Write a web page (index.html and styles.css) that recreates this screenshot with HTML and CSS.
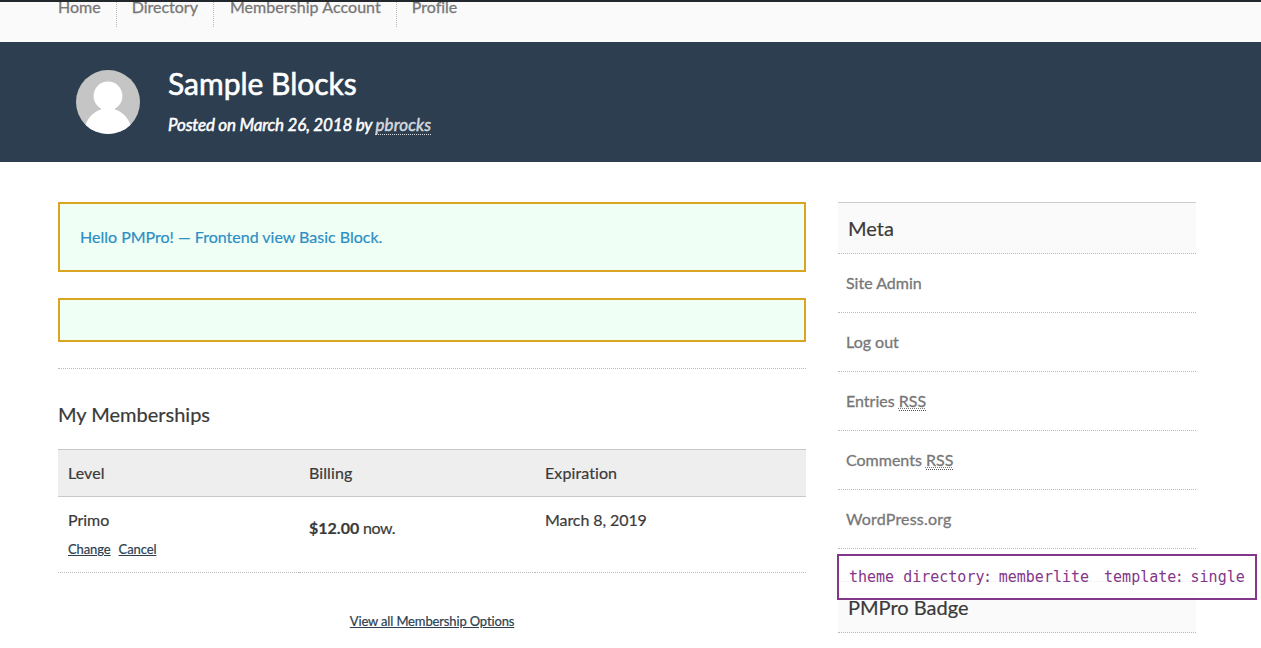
FILE: index.html
```html
<!DOCTYPE html>
<html lang="en">
<head>
<meta charset="utf-8">
<title>Sample Blocks</title>
<link rel="stylesheet" href="styles.css">
</head>
<body>
<nav class="nav"><a>Home</a><a>Directory</a><a class="account">Membership Account</a><a>Profile</a></nav>
<header class="masthead">
  <svg class="avatar" viewBox="0 0 64 64"><defs><clipPath id="round"><circle cx="32" cy="32" r="32"/></clipPath></defs><g clip-path="url(#round)"><rect width="64" height="64" fill="#c5c5c5"/><g fill="#fff"><circle cx="32" cy="26" r="14.400"/><path d="M25 36v3.500C17 42 12 48 9.500 55v9h45v-9C52 48 47 42 39 39.500V36z"/></g></g></svg>
  <div class="heading">
    <h1>Sample Blocks</h1>
    <p>Posted on March 26, 2018 by <a>pbrocks</a></p>
  </div>
</header>
<div class="page">
  <main class="content">
    <div class="block block-text">Hello PMPro! — Frontend view Basic Block.</div>
    <div class="block block-empty"></div>
    <hr>
    <h2>My Memberships</h2>
    <table>
      <thead><tr><th class="level">Level</th><th class="billing">Billing</th><th>Expiration</th></tr></thead>
      <tbody><tr><td>Primo<div class="actions"><a>Change</a><a>Cancel</a></div></td><td class="price"><b>$12.00</b> now.</td><td class="expires">March 8, 2019</td></tr></tbody>
    </table>
    <p class="options"><a>View all Membership Options</a></p>
  </main>
  <aside class="sidebar">
    <h3>Meta</h3>
    <ul>
      <li>Site Admin</li><li>Log out</li><li>Entries <abbr>RSS</abbr></li><li>Comments <abbr>RSS</abbr></li><li class="wp">WordPress.org</li>
    </ul>
    <h3 class="badge-title">PMPro Badge</h3>
  </aside>
</div>
<div class="debug"><span>theme directory<i>:</i> memberlite</span><span>template<i>:</i> single</span></div>
</body>
</html>
```
FILE: styles.css
```css
* { box-sizing: border-box; }
html, body { height: 648px; overflow: hidden; }
body { margin: 0; background: #fff; color: #3a3a3a; font: 16px/26px Lato, sans-serif; font-variant-ligatures: none; -webkit-text-stroke: .2px; }
h1, h2, h3, p, ul { margin: 0; padding: 0; }
.nav { display: flex; height: 42px; padding-left: 43px; background: #fafafa; border-top: 2px solid #23282d; color: #777; overflow: hidden; }
.nav a { height: 25px; line-height: 10px; padding: 0 15px; border-right: 1px dotted #bbb; -webkit-text-stroke: .3px; }
.nav .account { letter-spacing: .06px; padding-left: 16px; }
.nav a:last-child { border: 0; }
.masthead { display: flex; height: 120px; padding: 28px 76px; background: #2c3e50; color: #fff; }
.avatar { width: 64px; height: 64px; margin-right: 28px; }
.heading h1 { font-size: 30px; line-height: 26px; font-weight: 400; -webkit-text-stroke: .6px; }
.heading p { margin-top: 16px; font-size: 17px; letter-spacing: -.15px; word-spacing: -.3px; font-style: italic; font-weight: 400; -webkit-text-stroke: .5px; }
.heading a { display: inline-block; line-height: 19px; letter-spacing: .1px; color: #d5d8dc; border-bottom: 1px dotted #ddd; }
.page { display: flex; gap: 32px; padding: 40px 65px 0 58px; }
.content { width: 748px; }
.block { margin-bottom: 26px; background: #f0fff5; border: 2px solid #daa520; color: #2c8fc5; }
.block-text { height: 70px; padding: 20px; }
.block-empty { height: 44px; }
hr { margin: 0; border: 0; border-top: 1px dotted #bbb; }
h2, h3 { font-size: 20px; font-weight: 400; }
h2 { margin-top: 32px; line-height: 26px; }
table { width: 748px; margin-top: 22px; border-collapse: separate; border-spacing: 0; table-layout: fixed; }
th { height: 48px; padding: 0 10px; background: #eee; border-top: 1px solid #c8c8c8; border-bottom: 1px solid #c8c8c8; text-align: left; font-weight: 400; letter-spacing: .1px; }
.level { width: 241px; }
.billing { width: 236px; }
td { height: 76px; padding: 10px 10px 0; border-bottom: 1px dotted #bbb; vertical-align: top; }
td.price { padding-top: 18px; letter-spacing: -.4px; }
td.expires { letter-spacing: -.08px; }
td b { letter-spacing: 0; }
.actions { display: flex; gap: 8px; margin-top: 3px; font-size: 13px; letter-spacing: -.1px; }
.actions a, .options a { color: #2c3e50; text-decoration: underline; }
.options { margin-top: 35px; text-align: center; font-size: 13px; letter-spacing: -.14px; }
.sidebar { width: 358px; }
h3 { height: 52px; padding: 0 10px; background: #fafafa; border-top: 1px solid #ccc; border-bottom: 1px dotted #bbb; line-height: 50px; }
ul { list-style: none; }
li { height: 59px; padding: 0 8px; line-height: 57px; color: #777; border-bottom: 1px dotted #bbb; -webkit-text-stroke: .3px; }
.wp { letter-spacing: .18px; }
abbr { border-bottom: 1px dotted #555; text-decoration: underline dotted 1px; text-underline-offset: 1px; }
.badge-title { margin-top: 32px; }
.debug { position: absolute; left: 837px; top: 554px; width: 420px; height: 46px; padding: 8px 10px; display: flex; gap: 15px; background: rgba(255, 255, 255, .8); border: 2px solid #84368a; color: #84368a; font: 15px/26px "DejaVu Sans Mono", monospace; white-space: nowrap; -webkit-text-stroke: 0; }
.debug i { margin-left: -1.5px; font-style: normal; letter-spacing: -2.3px; }
```
